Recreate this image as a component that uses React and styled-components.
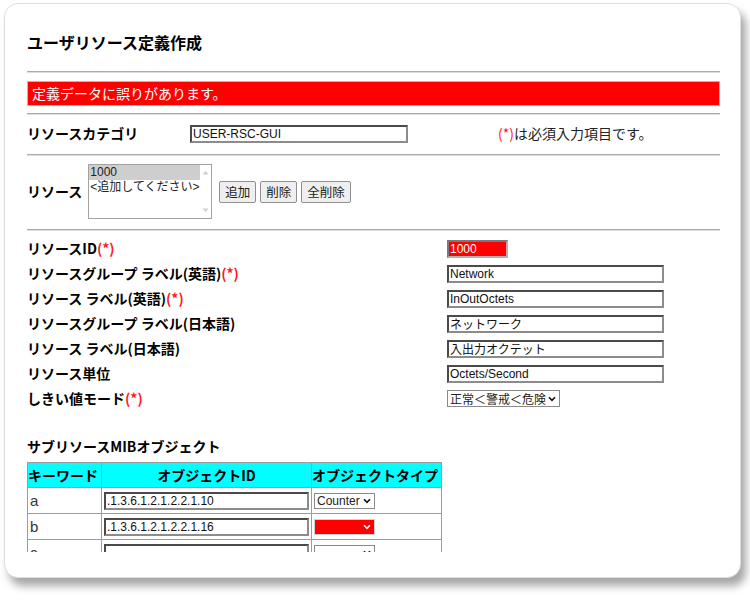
import React from 'react';
import styled, { createGlobalStyle } from 'styled-components';

const Global = createGlobalStyle`
  html, body { margin: 0; padding: 0; background: #fff; }
  body { font-family: "Noto Sans CJK JP", "Liberation Sans", sans-serif; color: #000; }
  * { box-sizing: border-box; }
`;

const Page = styled.div`
  width: 750px;
  height: 610px;
  padding: 3px 0 0 4px;
`;

const Card = styled.div`
  width: 737px;
  height: 575px;
  background: #fff;
  border: 1px solid #dedede;
  border-radius: 14px;
  box-shadow: 5px 8px 8px rgba(0, 0, 0, 0.35);
  padding: 0 20px 0 22px;
`;

const Viewport = styled.div`
  height: 548px;
  overflow: hidden;
  padding-top: 28px;
`;

const Title = styled.h1`
  margin: 0;
  font-size: 16px;
  line-height: 20px;
  font-weight: 700;
`;

const Rule = styled.div`
  height: 2px;
  margin-top: ${p => p.$top || 0}px;
  border-top: 1px solid #ababab;
  border-bottom: 1px solid #dcdcdc;
`;

const ErrorBar = styled.div`
  margin-top: 8px;
  height: 25px;
  background: #ff0000;
  border: 1px solid #b8b8b8;
  color: #fff;
  font-size: 14px;
  line-height: 23px;
  padding-left: 4px;
`;

const CategoryRow = styled.div`
  display: grid;
  grid-template-columns: 163px 308px 1fr;
  align-items: center;
  padding: 9px 0 11px;
`;

const Label = styled.span`
  font-size: 14px;
  line-height: 19px;
  font-weight: 700;
  white-space: nowrap;
`;

const Req = styled.span`
  color: #ff1a1a;
  font-weight: ${p => (p.$light ? 400 : 700)};
`;

const Note = styled.span`
  font-size: 14px;
  line-height: 19px;
  color: #222;
`;

const TextInput = styled.input`
  display: block;
  width: ${p => p.$w || 218}px;
  height: 18px;
  margin: 0;
  padding: 0 1px;
  font-family: "Liberation Sans", "Noto Sans CJK JP", sans-serif;
  font-size: 12px;
  color: #111;
  background: ${p => (p.$error ? '#ff0000' : '#fff')};
  border: 2px solid;
  border-color: ${p => (p.$error ? '#7a7a7a #b0b0b0 #b0b0b0 #7a7a7a' : '#4a4a4a #8c8c8c #8c8c8c #4a4a4a')};
  ${p => p.$error && 'color: #fff;'}
  outline: none;
`;

const ResourceRow = styled.div`
  display: flex;
  align-items: center;
  margin: 8px 0 10px;
  height: 55px;
`;

const ListBox = styled.div`
  margin-left: 6px;
  width: 124px;
  height: 55px;
  border: 1px solid #a3a3a3;
  display: flex;
  background: #fff;
`;

const Options = styled.div`
  flex: 1;
  font-family: "Liberation Sans", "Noto Sans CJK JP", sans-serif;
  font-size: 12px;
  line-height: 15px;
  color: #222;
`;

const Option = styled.div`
  padding-left: 1px;
  background: ${p => (p.$selected ? '#cecece' : 'transparent')};
  white-space: nowrap;
`;

const ScrollBar = styled.div`
  width: 15px;
  display: flex;
  flex-direction: column;
  justify-content: space-between;
  align-items: center;
  padding: 5px 0;
  background: #fff;
`;

const Buttons = styled.div`
  display: flex;
  gap: 4px;
  margin-left: 7px;
`;

const Button = styled.button`
  height: 22px;
  padding: 0 5px;
  margin: 0;
  font-family: "Noto Sans CJK JP", sans-serif;
  font-size: 12.5px;
  line-height: 18px;
  color: #222;
  background: #efefef;
  border: 1px solid #8f8f8f;
  border-radius: 2px;
`;

const Fields = styled.div`
  margin-top: 5px;
`;

const FieldRow = styled.div`
  display: grid;
  grid-template-columns: 420px 1fr;
  align-items: center;
  height: 25px;
`;

const SelectWrap = styled.span`
  position: relative;
  display: block;
  width: ${p => p.$w}px;
  height: ${p => p.$h || 16}px;
`;

const SelectBox = styled.select`
  appearance: none;
  -webkit-appearance: none;
  display: block;
  width: 100%;
  height: 100%;
  margin: 0;
  padding: 0 10px 0 2px;
  font-family: ${p => (p.$latin ? '"Liberation Sans", "Noto Sans CJK JP"' : '"Noto Sans CJK JP", "Liberation Sans"')}, sans-serif;
  font-size: 12px;
  line-height: 14px;
  color: ${p => (p.$error ? '#fff' : '#222')};
  background: ${p => (p.$error ? '#ff0000' : '#fff')};
  border: 1px solid ${p => (p.$error ? '#d0d0d0' : '#8a8a8a')};
  border-radius: 0;
  outline: none;
`;

const Arrow = styled.svg`
  position: absolute;
  right: 4px;
  top: 50%;
  margin-top: -3px;
  pointer-events: none;
`;

const Select = ({ w, h, error, latin, value }) => (
  <SelectWrap $w={w} $h={h}>
    <SelectBox $error={error} $latin={latin} defaultValue={value}>
      <option value={value}>{value}</option>
    </SelectBox>
    <Arrow width="8" height="6" viewBox="0 0 8 6">
      <path d="M1 1.2 L4 4.4 L7 1.2" fill="none" stroke={error ? '#fff' : '#111'} strokeWidth="1.6" />
    </Arrow>
  </SelectWrap>
);

const SubTitle = styled.h2`
  margin: 25px 0 0;
  font-size: 14px;
  line-height: 20px;
  font-weight: 700;
`;

const Table = styled.table`
  margin-top: 6px;
  border-collapse: collapse;
  width: 414px;
  table-layout: fixed;
`;

const Th = styled.th`
  background: #00ffff;
  height: 25px;
  padding: 0;
  border: 1px solid #9c9c9c;
  font-size: 14px;
  font-weight: 700;
  white-space: nowrap;
  text-align: ${p => p.$align || 'center'};
`;

const Td = styled.td`
  height: 26px;
  padding: 0 2px;
  border: 1px solid #9c9c9c;
  font-family: "Liberation Sans", "Noto Sans CJK JP", sans-serif;
  font-size: 15px;
  color: #333;
`;

const ChevronDown = () => (
  <svg width="7" height="5" viewBox="0 0 7 5">
    <path d="M0.5 0.5 L6.5 0.5 L3.5 4 Z" fill="#cfcfcf" />
  </svg>
);
const ChevronUp = () => (
  <svg width="7" height="5" viewBox="0 0 7 5">
    <path d="M0.5 4.5 L6.5 4.5 L3.5 1 Z" fill="#cfcfcf" />
  </svg>
);

const fields = [
  { label: 'リソースID', req: true, value: '1000', error: true, w: 61 },
  { label: 'リソースグループ ラベル(英語)', req: true, value: 'Network' },
  { label: 'リソース ラベル(英語)', req: true, value: 'InOutOctets' },
  { label: 'リソースグループ ラベル(日本語)', value: 'ネットワーク' },
  { label: 'リソース ラベル(日本語)', value: '入出力オクテット' },
  { label: 'リソース単位', value: 'Octets/Second' },
];

const rows = [
  { key: 'a', oid: '.1.3.6.1.2.1.2.2.1.10', type: 'Counter' },
  { key: 'b', oid: '.1.3.6.1.2.1.2.2.1.16', type: '', error: true },
  { key: 'c', oid: '', type: '' },
];

export default function App() {
  return (
    <>
      <Global />
      <Page>
        <Card>
          <Viewport>
            <Title>ユーザリソース定義作成</Title>
            <Rule $top={19} />
            <ErrorBar>定義データに誤りがあります。</ErrorBar>
            <Rule $top={7} />
            <CategoryRow>
              <Label>リソースカテゴリ</Label>
              <TextInput defaultValue="USER-RSC-GUI" $w={218} />
              <Note>
                <Req $light>(*)</Req>は必須入力項目です。
              </Note>
            </CategoryRow>
            <Rule />
            <ResourceRow>
              <Label>リソース</Label>
              <ListBox>
                <Options>
                  <Option $selected>1000</Option>
                  <Option>&lt;追加してください&gt;</Option>
                </Options>
                <ScrollBar>
                  <ChevronUp />
                  <ChevronDown />
                </ScrollBar>
              </ListBox>
              <Buttons>
                <Button>追加</Button>
                <Button>削除</Button>
                <Button>全削除</Button>
              </Buttons>
            </ResourceRow>
            <Rule />
            <Fields>
              {fields.map(f => (
                <FieldRow key={f.label}>
                  <Label>
                    {f.label}
                    {f.req && <Req>(*)</Req>}
                  </Label>
                  <TextInput defaultValue={f.value} $w={f.w || 217} $error={f.error} />
                </FieldRow>
              ))}
              <FieldRow>
                <Label>
                  しきい値モード<Req>(*)</Req>
                </Label>
                <Select w={113} h={17} value="正常＜警戒＜危険" />
              </FieldRow>
            </Fields>
            <SubTitle>サブリソースMIBオブジェクト</SubTitle>
            <Table>
              <colgroup>
                <col style={{ width: 74 }} />
                <col style={{ width: 210 }} />
                <col style={{ width: 130 }} />
              </colgroup>
              <thead>
                <tr>
                  <Th $align="left">キーワード</Th>
                  <Th>オブジェクトID</Th>
                  <Th $align="left">オブジェクトタイプ</Th>
                </tr>
              </thead>
              <tbody>
                {rows.map(r => (
                  <tr key={r.key}>
                    <Td>{r.key}</Td>
                    <Td>
                      <TextInput defaultValue={r.oid} $w={205} />
                    </Td>
                    <Td>
                      <Select w={61} error={r.error} latin value={r.type} />
                    </Td>
                  </tr>
                ))}
              </tbody>
            </Table>
          </Viewport>
        </Card>
      </Page>
    </>
  );
}
